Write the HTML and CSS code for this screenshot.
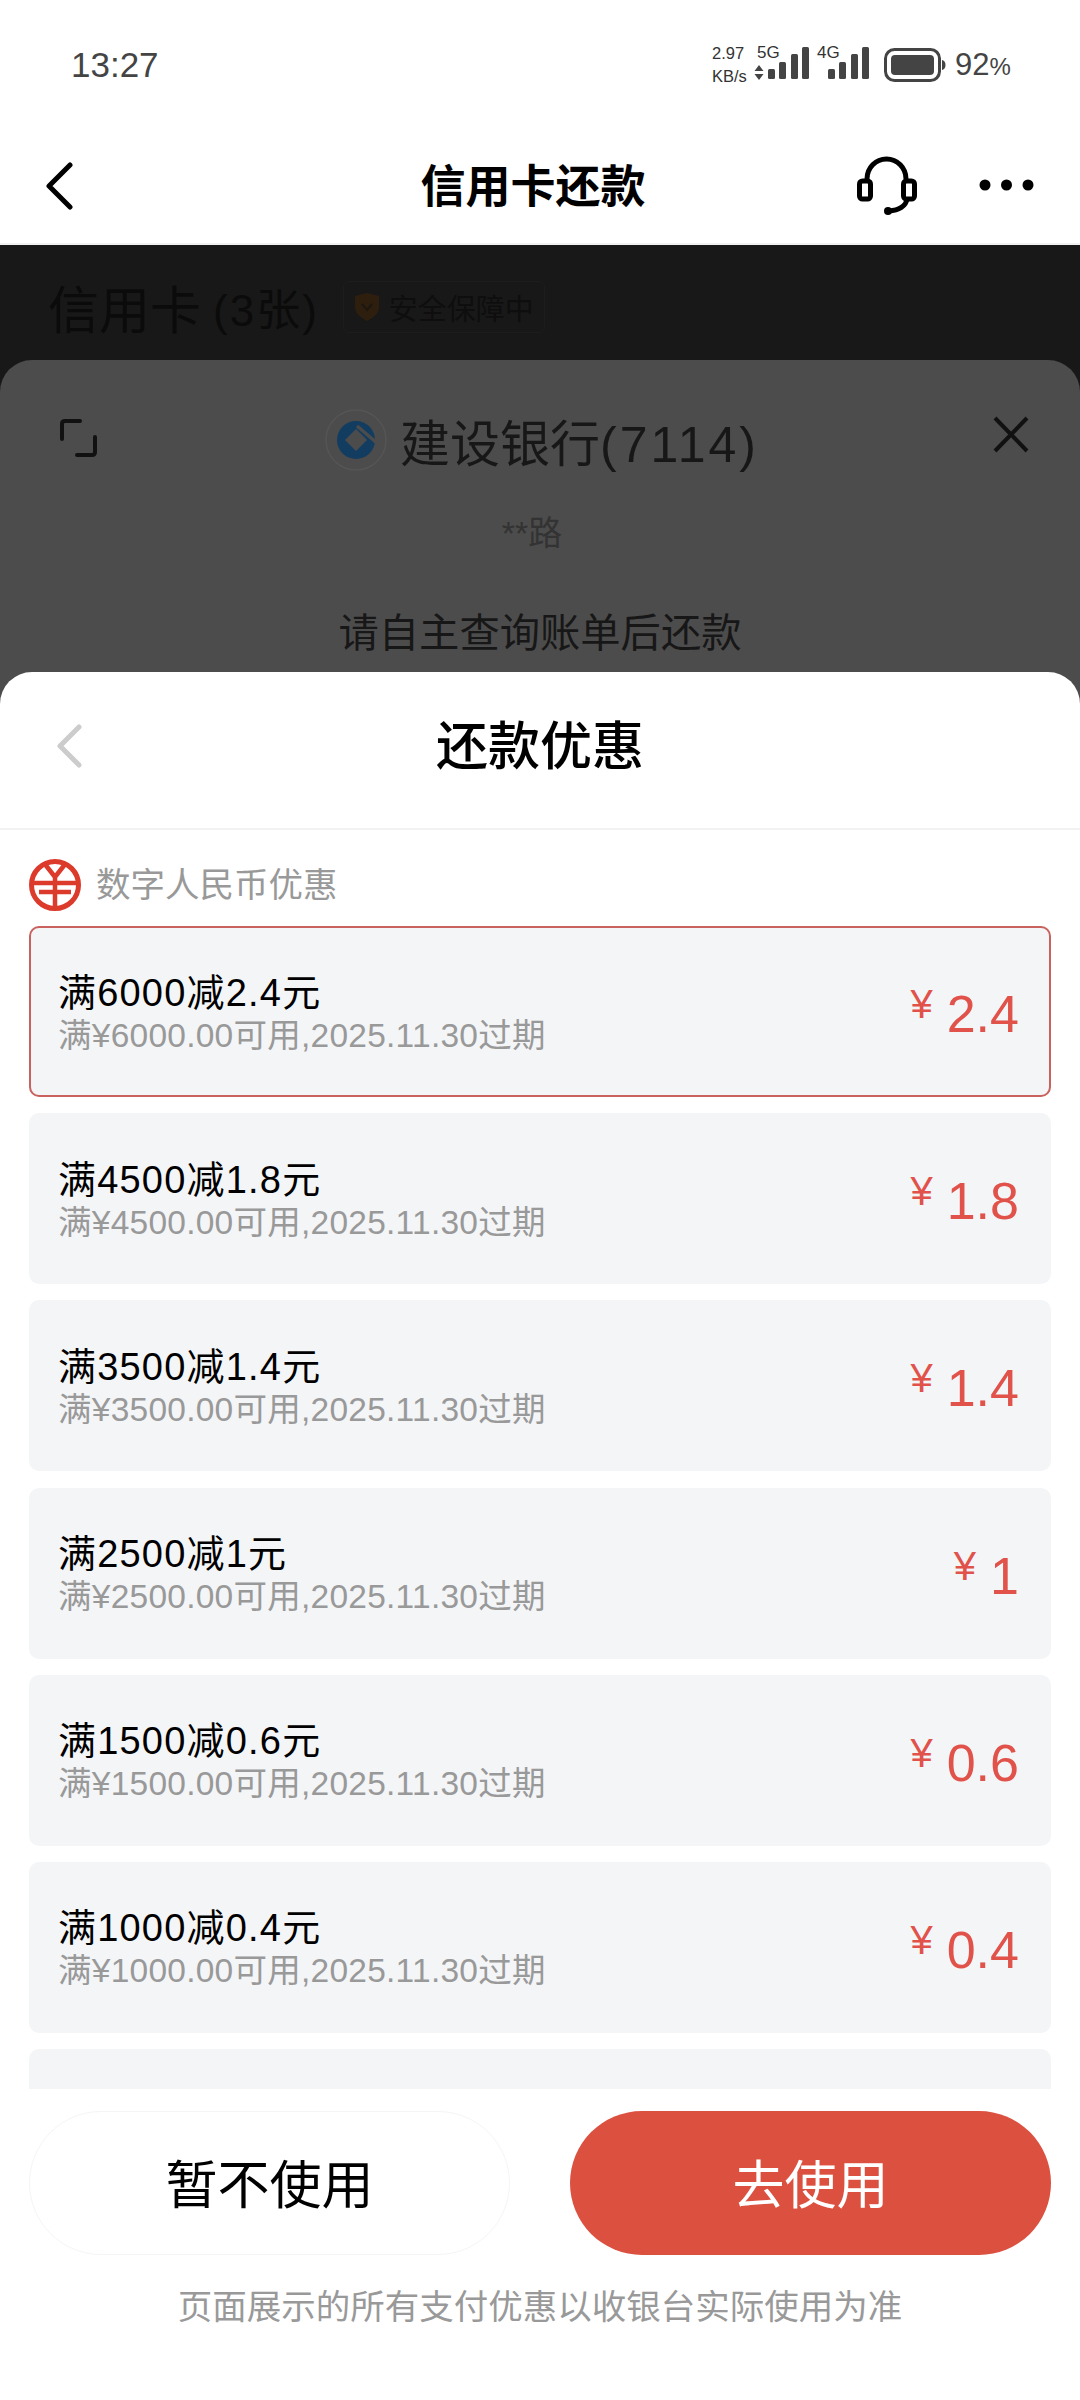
FILE: index.html
```html
<!DOCTYPE html>
<html lang="zh-CN">
<head>
    <meta charset="UTF-8">
    <meta name="viewport" content="width=device-width, initial-scale=1.0">
    <title>信用卡还款</title>
    <link rel="stylesheet" href="styles.css">
</head>
<body>
    <div class="status-bar">
        <span class="status-time">13:27</span>
        <div class="status-icons">
            <div class="net-speed"><span>2.97</span><span>KB/s</span></div>
            <div class="sim sim-first">
                <span class="sim-label">5G</span>
                <svg class="sim-bars" width="55" height="36" viewBox="0 0 55 36">
                    <path class="arrows" d="M5 0l4.500 6h-9zM5 15l4.500-6h-9z" transform="translate(0 18)"/>
                    <rect x="14" y="22" width="7" height="10" rx="1.500"/>
                    <rect x="25" y="15" width="7" height="17" rx="1.500"/>
                    <rect x="37" y="7" width="7" height="25" rx="1.500"/>
                    <rect x="48" y="0" width="7" height="32" rx="1.500"/>
                </svg>
            </div>
            <div class="sim sim-second">
                <span class="sim-label">4G</span>
                <svg class="sim-bars" width="42" height="36" viewBox="0 0 42 36">
                    <rect x="1" y="22" width="7" height="10" rx="1.500"/>
                    <rect x="12" y="15" width="7" height="17" rx="1.500"/>
                    <rect x="24" y="7" width="7" height="25" rx="1.500"/>
                    <rect x="35" y="0" width="7" height="32" rx="1.500"/>
                </svg>
            </div>
            <svg class="battery" width="62" height="34" viewBox="0 0 62 34">
                <rect x="1.500" y="1.500" width="54" height="31" rx="9" fill="none" stroke="#444" stroke-width="3"/>
                <rect x="7" y="7" width="43" height="20" rx="4" fill="#444"/>
                <path d="M58 12c2 .5 3.500 2 3.500 5s-1.500 4.500-3.500 5z" fill="#444"/>
            </svg>
            <span class="battery-text">92<small>%</small></span>
        </div>
    </div>

    <div class="nav-bar">
        <svg class="nav-back" width="30" height="48" viewBox="0 0 30 48">
            <path d="M26 3L5 24l21 21" fill="none" stroke="#000" stroke-width="5" stroke-linecap="round" stroke-linejoin="round"/>
        </svg>
        <h1 class="nav-title">信用卡还款</h1>
        <svg class="nav-headset" width="60" height="60" viewBox="0 0 60 60">
            <path d="M10 26V24a19.500 20 0 0 1 39 0v2" fill="none" stroke="#000" stroke-width="5"/>
            <rect x="2.500" y="26" width="11" height="18" rx="3" fill="none" stroke="#000" stroke-width="5"/>
            <rect x="46.500" y="26" width="11" height="18" rx="3" fill="none" stroke="#000" stroke-width="5"/>
            <path d="M50 44c-1 7-8 11.500-18 12" fill="none" stroke="#000" stroke-width="5"/>
            <circle cx="31" cy="56" r="4" fill="#000"/>
        </svg>
        <svg class="nav-more" width="55" height="12" viewBox="0 0 55 12">
            <circle cx="6" cy="6" r="5.500"/>
            <circle cx="27.500" cy="6" r="5.500"/>
            <circle cx="49" cy="6" r="5.500"/>
        </svg>
    </div>

    <div class="backdrop">
        <div class="page-head">
            <span class="page-title">信用卡</span>
            <span class="page-count">(3张)</span>
            <span class="safe-badge">
                <svg width="26" height="30" viewBox="0 0 26 30">
                    <path d="M13 1l12 3v11c0 7-6 11-12 14C7 26 1 22 1 15V4z" fill="#2e1e0e"/>
                    <path d="M8 12l5 6 5-6" fill="none" stroke="#1c1710" stroke-width="2"/>
                </svg>
                安全保障中
            </span>
        </div>

        <div class="pay-sheet">
            <div class="pay-head">
                <svg class="pay-expand" width="38" height="38" viewBox="0 0 38 38">
                    <path d="M2 20V5q0-3 3-3h15M17 36h15q3 0 3-3V18" fill="none" stroke="#111" stroke-width="4" stroke-linecap="round"/>
                </svg>
                <div class="pay-bank">
                    <svg width="62" height="62" viewBox="0 0 62 62">
                        <circle cx="31" cy="31" r="30" fill="none" stroke="#555" stroke-width="1.500"/>
                        <circle cx="31" cy="31" r="19" fill="#123c60"/>
                        <path d="M31 20l11 11-11 11-11-11z" fill="#4c4c4c"/>
                        <path d="M32 17l20 17" fill="none" stroke="#4c4c4c" stroke-width="3.500"/>
                    </svg>
                    <span>建设银行<span class="pay-tail">(7114)</span></span>
                </div>
                <svg class="pay-close" width="38" height="38" viewBox="0 0 38 38">
                    <path d="M3 2l32 33M35 2L3 35" fill="none" stroke="#111" stroke-width="4"/>
                </svg>
            </div>
            <div class="pay-name">**路</div>
            <div class="pay-hint">请自主查询账单后还款</div>
        </div>

        <div class="coupon-sheet">
            <div class="sheet-head">
                <svg class="sheet-back" width="26" height="44" viewBox="0 0 26 44">
                    <path d="M23 3L4 22l19 19" fill="none" stroke="#ccc" stroke-width="5" stroke-linecap="round" stroke-linejoin="round"/>
                </svg>
                <h2 class="sheet-title">还款优惠</h2>
            </div>

            <div class="coupon-group">
                <svg width="52" height="52" viewBox="0 0 52 52">
                    <circle cx="26" cy="26" r="23.500" fill="none" stroke="#dc3a2a" stroke-width="5"/>
                    <path d="M15 4l11 14L37 4M26 18v32M2 24h48M10 33h32" fill="none" stroke="#dc3a2a" stroke-width="4.500"/>
                </svg>
                <span>数字人民币优惠</span>
            </div>

            <div class="coupon-list">
                <div class="coupon coupon-selected">
                    <div class="coupon-text">
                        <div class="coupon-name">满6000减2.4元</div>
                        <div class="coupon-desc">满¥6000.00可用,2025.11.30过期</div>
                    </div>
                    <div class="coupon-amount"><span class="yen">¥</span>2.4</div>
                </div>
                <div class="coupon">
                    <div class="coupon-text">
                        <div class="coupon-name">满4500减1.8元</div>
                        <div class="coupon-desc">满¥4500.00可用,2025.11.30过期</div>
                    </div>
                    <div class="coupon-amount"><span class="yen">¥</span>1.8</div>
                </div>
                <div class="coupon">
                    <div class="coupon-text">
                        <div class="coupon-name">满3500减1.4元</div>
                        <div class="coupon-desc">满¥3500.00可用,2025.11.30过期</div>
                    </div>
                    <div class="coupon-amount"><span class="yen">¥</span>1.4</div>
                </div>
                <div class="coupon">
                    <div class="coupon-text">
                        <div class="coupon-name">满2500减1元</div>
                        <div class="coupon-desc">满¥2500.00可用,2025.11.30过期</div>
                    </div>
                    <div class="coupon-amount"><span class="yen">¥</span>1</div>
                </div>
                <div class="coupon">
                    <div class="coupon-text">
                        <div class="coupon-name">满1500减0.6元</div>
                        <div class="coupon-desc">满¥1500.00可用,2025.11.30过期</div>
                    </div>
                    <div class="coupon-amount"><span class="yen">¥</span>0.6</div>
                </div>
                <div class="coupon">
                    <div class="coupon-text">
                        <div class="coupon-name">满1000减0.4元</div>
                        <div class="coupon-desc">满¥1000.00可用,2025.11.30过期</div>
                    </div>
                    <div class="coupon-amount"><span class="yen">¥</span>0.4</div>
                </div>
                <div class="coupon"></div>
            </div>

            <div class="sheet-actions">
                <button class="btn btn-skip">暂不使用</button>
                <button class="btn btn-use">去使用</button>
            </div>
            <div class="sheet-note">页面展示的所有支付优惠以收银台实际使用为准</div>
        </div>
    </div>
</body>
</html>
```

FILE: styles.css
```css
* {
    box-sizing: border-box;
}
html, body {
    margin: 0;
    padding: 0;
    width: 1080px;
    height: 2400px;
    overflow: hidden;
}
body {
    font-family: "Liberation Sans", "Noto Sans CJK SC", sans-serif;
    background-color: white;
    color: black;
    display: flex;
    flex-direction: column;
}
h1, h2 {
    margin: 0;
}

/* status bar */
.status-bar {
    height: 130px;
    display: flex;
    justify-content: space-between;
    align-items: center;
    padding: 0 69px 0 71px;
    color: #444;
}
.status-time {
    font-size: 35px;
}
.status-icons {
    display: flex;
    align-items: center;
}
.net-speed {
    display: flex;
    flex-direction: column;
    font-size: 16.500px;
    line-height: 23px;
    width: 42px;
    color: #333;
}
.sim {
    position: relative;
    height: 36px;
}
.sim-first {
    width: 73px;
}
.sim-second {
    width: 42px;
}
.sim-bars {
    display: block;
    fill: #444;
}
.sim-label {
    position: absolute;
    font-size: 17px;
    line-height: 18px;
    top: -3px;
    left: 3px;
    color: #333;
}
.sim-second .sim-label {
    left: -10px;
}
.battery {
    margin-left: 15px;
    margin-right: 9px;
}
.battery-text {
    font-size: 31px;
    width: 56px;
}
.battery-text small {
    font-size: 24px;
}

/* top nav */
.nav-bar {
    height: 115px;
    position: relative;
    display: flex;
    align-items: center;
    padding: 0 24px 0 44px;
    border-bottom: 2px solid #f2f2f2;
}
.nav-title {
    position: absolute;
    left: 0;
    right: 0;
    margin-left: -14px;
    margin-top: -6px;
    text-align: center;
    font-size: 45px;
    font-weight: 700;
}
.nav-back {
    margin-top: -2px;
}
.nav-headset {
    margin-left: auto;
    margin-top: -3px;
}
.nav-more {
    margin-left: 62px;
    margin-right: 22px;
    margin-top: -3px;
}

/* dimmed page behind the sheets */
.backdrop {
    flex: 1;
    background-color: #181818;
    display: flex;
    flex-direction: column;
    min-height: 0;
}
.page-head {
    height: 115px;
    display: flex;
    align-items: center;
    padding: 8px 0 0 48px;
    color: #0b0b0b;
}
.page-title {
    font-size: 51px;
}
.page-count {
    font-size: 44px;
    margin-left: 12px;
    letter-spacing: 2px;
}
.safe-badge {
    display: flex;
    align-items: center;
    gap: 9px;
    margin-left: 24px;
    padding: 4px 10px;
    font-size: 29px;
    color: #0e0e0e;
    border: 1px solid #1d1d1d;
    border-radius: 6px;
}

.pay-sheet {
    height: 342px;
    background-color: #4c4c4c;
    border-radius: 32px 32px 0 0;
    color: #171717;
    padding: 53px 52px 0 60px;
    flex-shrink: 0;
}
.pay-head {
    display: flex;
    align-items: center;
    justify-content: space-between;
    height: 60px;
}
.pay-expand {
    margin-top: -10px;
}
.pay-close {
    margin-top: -16px;
    margin-right: -2px;
}
.pay-bank {
    display: flex;
    align-items: center;
    gap: 13px;
    font-size: 50px;
    margin-left: -6px;
    margin-top: -6px;
}
.pay-tail {
    letter-spacing: 3px;
}
.pay-name {
    text-align: center;
    font-size: 34px;
    color: #333;
    margin-top: 33px;
    margin-left: -24px;
}
.pay-hint {
    text-align: center;
    font-size: 40.300px;
    margin-top: 45px;
    margin-left: -8px;
}

/* coupon sheet */
.coupon-sheet {
    flex: 1;
    margin-top: -30px;
    background-color: white;
    border-radius: 32px 32px 0 0;
    display: flex;
    flex-direction: column;
    min-height: 0;
}
.sheet-head {
    height: 158px;
    flex-shrink: 0;
    display: flex;
    align-items: center;
    padding-left: 56px;
    position: relative;
    border-bottom: 2px solid #f2f2f2;
}
.sheet-back {
    margin-top: -8px;
}
.sheet-title {
    position: absolute;
    left: 0;
    right: 0;
    margin-top: -16px;
    text-align: center;
    font-size: 52px;
    font-weight: 500;
}
.coupon-group {
    display: flex;
    align-items: center;
    gap: 15px;
    padding: 29px 0 15px 29px;
    font-size: 34.500px;
    line-height: 46px;
    color: #999;
    flex-shrink: 0;
}
.coupon-group svg {
    display: block;
}
.coupon-list {
    height: 1163px;
    flex-shrink: 0;
    overflow: hidden;
    padding: 0 29px;
    display: flex;
    flex-direction: column;
    gap: 16.200px;
}
.coupon {
    height: 171px;
    flex-shrink: 0;
    display: flex;
    align-items: center;
    justify-content: space-between;
    padding: 0 32px 0 29px;
    background-color: #f4f5f7;
    border-radius: 10px;
}
.coupon-selected {
    border: 2px solid #c9625f;
    padding: 0 30px 0 27px;
}
.coupon-text {
    margin-top: 4px;
}
.coupon-name {
    font-size: 38px;
    line-height: 44px;
    letter-spacing: 1.200px;
}
.coupon-desc {
    font-size: 33.500px;
    line-height: 42px;
    letter-spacing: 0.250px;
    color: #999;
}
.coupon-amount {
    font-size: 52px;
    color: #e0524a;
    display: flex;
    align-items: flex-start;
    line-height: 60px;
    margin-top: 5px;
}
.yen {
    font-size: 40px;
    line-height: 36px;
    margin-right: 14px;
    margin-top: 2px;
}

.sheet-actions {
    display: flex;
    justify-content: space-between;
    padding: 22px 29px 0;
    flex-shrink: 0;
}
.btn {
    width: 481px;
    height: 144px;
    border-radius: 72px;
    font-family: inherit;
    font-size: 52px;
    padding: 0 0 3px;
}
.btn-skip {
    background-color: white;
    color: black;
    border: 1px solid #f5f5f5;
}
.btn-use {
    background-color: #dc5040;
    color: white;
    border: none;
}
.sheet-note {
    text-align: center;
    font-size: 34.500px;
    color: #999;
    margin-top: 24px;
}
```
